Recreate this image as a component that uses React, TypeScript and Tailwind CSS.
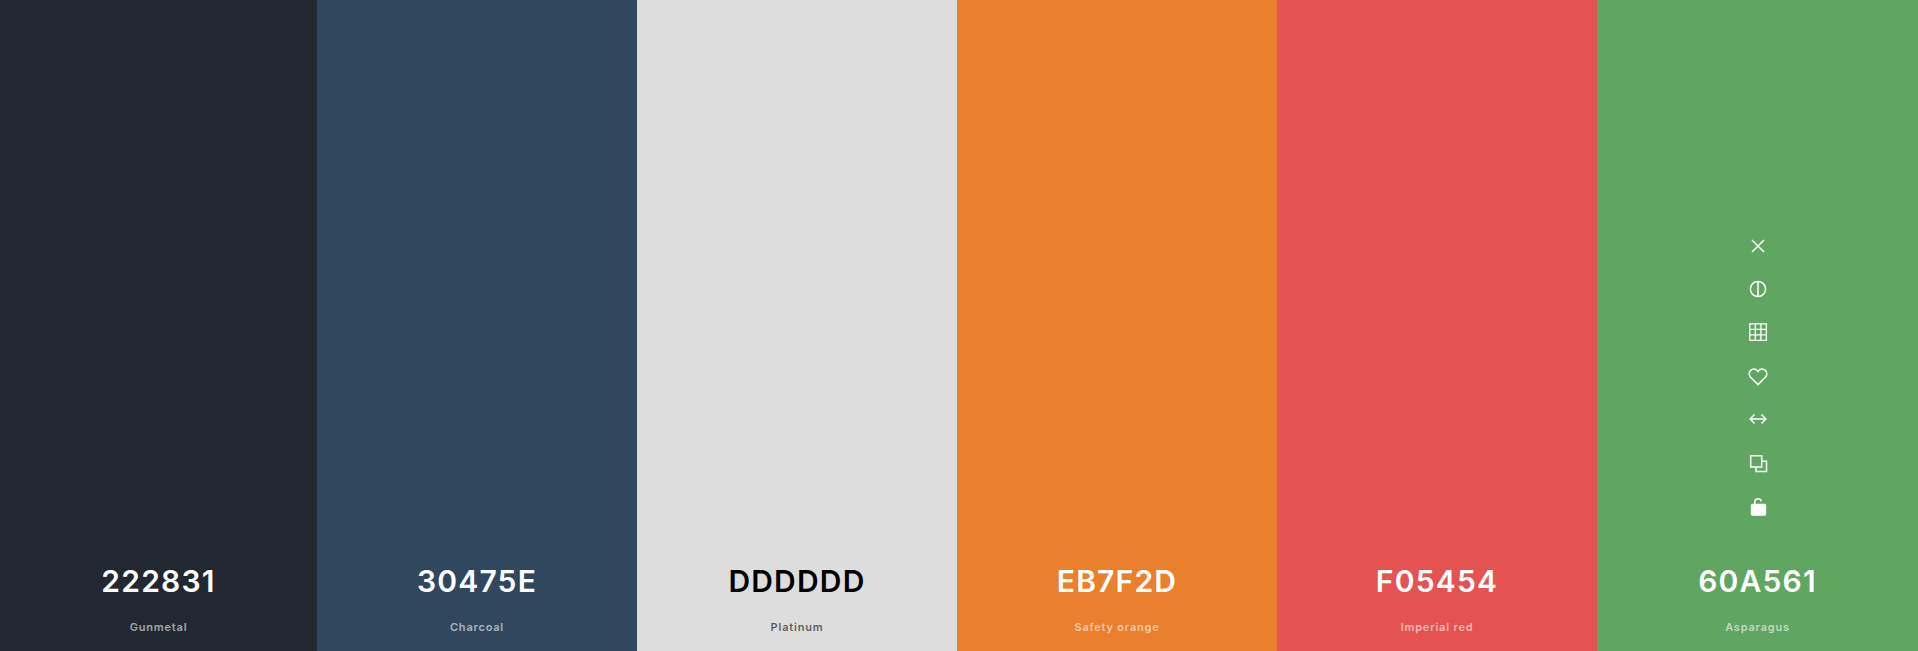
const colors = [
    { hex: "222831", name: "Gunmetal", bg: "bg-[#222831]", width: "w-[317px]", hexText: "text-white", nameText: "text-white/60" },
    { hex: "30475E", name: "Charcoal", bg: "bg-[#30475e]", width: "w-[320px]", hexText: "text-white", nameText: "text-white/60" },
    { hex: "DDDDDD", name: "Platinum", bg: "bg-[#dddddd]", width: "w-[320px]", hexText: "text-black", nameText: "text-black/60" },
    { hex: "EB7F2D", name: "Safety orange", bg: "bg-[#ea7f2e]", width: "w-[320px]", hexText: "text-white", nameText: "text-white/60" },
    { hex: "F05454", name: "Imperial red", bg: "bg-[#e55252]", width: "w-[320px]", hexText: "text-white", nameText: "text-white/60" },
    { hex: "60A561", name: "Asparagus", bg: "bg-[#60a561]", width: "flex-1", hexText: "text-white", nameText: "text-white/60" },
]

function Icon({ children }: { children: React.ReactNode }) {
    return (
        <svg width="20" height="20" viewBox="0 0 20 20" fill="none" stroke="currentColor" strokeWidth="1.5">
            {children}
        </svg>
    )
}

function Toolbar() {
    return (
        <div className="flex flex-col items-center gap-[23.4px] text-white">
            <Icon>
                <path d="M4 4l12 12M16 4L4 16" />
            </Icon>
            <Icon>
                <circle cx="10" cy="10" r="7.6" />
                <path d="M10 2.5v15" />
            </Icon>
            <Icon>
                <path d="M1.8 1.8h16.6v16.6H1.8zM7.3 1.8v16.6M12.9 1.8v16.6M1.8 7.3h16.6M1.8 12.9h16.6" strokeWidth="1.3" />
            </Icon>
            <Icon>
                <path d="M10 18.6L2.6 11.2C.8 9.3.8 6.2 2.6 4.4c1.9-1.9 5-1.7 6.8.3l.6.8.6-.8c1.8-2 4.9-2.2 6.8-.3 1.8 1.8 1.8 4.9 0 6.8z" />
            </Icon>
            <Icon>
                <path d="M2.5 10h15M6.5 5.6L2.2 10l4.3 4.4M13.5 5.6l4.3 4.4-4.3 4.4" />
            </Icon>
            <Icon>
                <path d="M2.7 2.7h11v11.2h-11z" />
                <path d="M8 13.9v4.6h10.5V8.2h-4.8" />
            </Icon>
            <svg width="20" height="20" viewBox="0 0 20 20" fill="none">
                <rect x="2.8" y="7.8" width="15.4" height="12" rx="1.8" fill="currentColor" />
                <path d="M6.8 8.5V6c0-2 1.5-3.3 3.3-3.3 1.6 0 2.9 1 3.2 2.6" stroke="currentColor" strokeWidth="1.5" />
            </svg>
        </div>
    )
}

export default function App() {
    return (
        <main className="flex h-[651px] w-full font-['Inter',sans-serif] antialiased">
            {colors.map((color) => (
                <section key={color.hex} className={`${color.bg} ${color.width} flex flex-col items-center justify-end pb-[16px]`}>
                    {color.name === "Asparagus" && (
                        <div className="mb-[47px]">
                            <Toolbar />
                        </div>
                    )}
                    <h2 className={`${color.hexText} text-[30px] leading-[36px] font-semibold tracking-[1.2px]`}>{color.hex}</h2>
                    <p className={`${color.nameText} mt-[20px] text-[11px] leading-[16px] font-semibold tracking-[0.8px]`}>{color.name}</p>
                </section>
            ))}
        </main>
    )
}
